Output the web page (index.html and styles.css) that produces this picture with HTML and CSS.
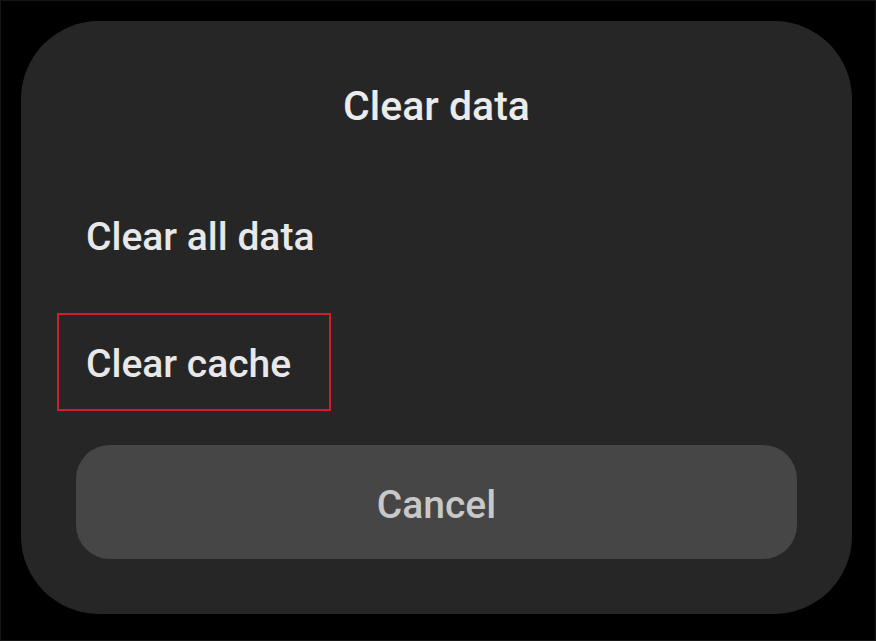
FILE: index.html
```html
<!DOCTYPE html>
<html>
<head>
<meta charset="utf-8">
<link rel="stylesheet" href="styles.css">
</head>
<body>
<div class="screen">
  <div class="dialog">
    <div class="title">Clear data</div>
    <div class="option first">Clear all data</div>
    <div class="option second highlighted">Clear cache</div>
    <div class="cancel">Cancel</div>
  </div>
</div>
</body>
</html>
```
FILE: styles.css
```css
html, body {
  margin: 0;
  padding: 0;
  background: #000;
}
.screen {
  width: 876px;
  height: 641px;
  box-sizing: border-box;
  border: 1px solid #161616;
  padding: 20px 23px 0 20px;
  font-family: Roboto, "Noto Sans", sans-serif;
  font-weight: 500;
}
.dialog {
  width: 831px;
  height: 593px;
  box-sizing: border-box;
  background: #262626;
  border-radius: 78px;
  padding: 61px 55px 0 55px;
  display: flex;
  flex-direction: column;
}
.title {
  font-size: 41px;
  line-height: 48px;
  color: #ebebeb;
  text-align: center;
}
.option {
  font-size: 39px;
  line-height: 48px;
  color: #e8e8e8;
  padding-left: 10px;
}
.option.first {
  margin-top: 83px;
}
.option.second {
  margin-top: 79px;
}
.highlighted {
  position: relative;
}
.highlighted::after {
  content: "";
  position: absolute;
  left: -19px;
  top: -27px;
  width: 274px;
  height: 98px;
  box-sizing: border-box;
  border: 2px solid #cf1f2a;
}
.cancel {
  margin-top: 57px;
  height: 114px;
  box-sizing: border-box;
  padding-top: 36px;
  background: #464646;
  border-radius: 34px;
  font-size: 39px;
  line-height: 48px;
  color: #c8c8c8;
  text-align: center;
}
```
